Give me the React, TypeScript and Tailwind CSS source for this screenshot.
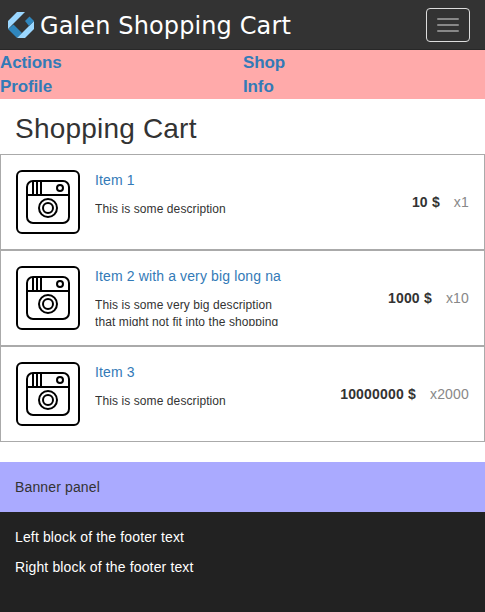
const helvetica = "font-['Liberation_Sans',sans-serif]";

interface Item {
  name: string;
  description: string;
  price: string;
  amount: string;
}

const items: Item[] = [
  { name: 'Item 1', description: 'This is some description', price: '10 $', amount: 'x1' },
  {
    name: 'Item 2 with a very big long na',
    description: 'This is some very big description that might not fit into the shopping',
    price: '1000 $',
    amount: 'x10',
  },
  { name: 'Item 3', description: 'This is some description', price: '10000000 $', amount: 'x2000' },
];

function Logo() {
  return (
    <svg width="26" height="26" viewBox="0 0 26 26" className="shrink-0">
      <path d="M0 17L5.5 12.5L14 21L9 26Z" fill="#2f86bd" />
      <path d="M0 9L9 0H17L0 17Z" fill="#9bd7ff" />
      <path d="M9 26L26 9V17L17 26Z" fill="#9bd7ff" />
      <path d="M17 9L21.5 4.5L26 9L21 14Z" fill="#2f86bd" />
    </svg>
  );
}

function CameraIcon() {
  return (
    <svg width="64" height="64" viewBox="0 0 64 64" fill="none" stroke="#000" strokeWidth="2" className="shrink-0">
      <rect x="1" y="1" width="62" height="62" rx="5" />
      <rect x="11" y="11" width="42" height="42" rx="6" />
      <path d="M11 25H53M17 11V25M21 11V25M25 11V25" />
      <circle cx="44" cy="18" r="3" />
      <circle cx="32" cy="38" r="9" />
      <circle cx="32" cy="38" r="5" />
    </svg>
  );
}

function CartItem({ name, description, price, amount }: Item) {
  return (
    <li className="flex h-24 border border-[#aaa] p-[15px]">
      <CameraIcon />
      <div className="ml-[15px] w-[190px] shrink-0">
        <a className="block h-5 whitespace-nowrap text-[14px] leading-5 tracking-[0.13px] text-[#337ab7]">{name}</a>
        <p className="mt-[11px] h-[29px] overflow-hidden text-[12px] leading-[17px] tracking-[0.09px] text-[#333]">
          {description}
        </p>
      </div>
      <div className="mt-[22px] -ml-10 flex grow justify-end gap-[14px] whitespace-nowrap text-[14px] leading-5 tracking-[0.18px]">
        <span className="font-bold text-[#333]">{price}</span>
        <span className="text-[#888]">{amount}</span>
      </div>
    </li>
  );
}

export default function App() {
  return (
    <div className={`flex min-h-[612px] flex-col bg-white text-[14px] leading-5 tracking-[0.14px] text-[#333] ${helvetica}`}>
      <header className="flex h-[50px] items-center justify-between border-b border-[#282828] bg-[#333] pl-2 pr-[15px]">
        <div className="flex items-center gap-[6px]">
          <Logo />
          <span className="pt-0.5 font-['DejaVu_Sans',sans-serif] text-[24px] leading-[48px] tracking-[0.12px] text-white">
            Galen Shopping Cart
          </span>
        </div>
        <button className="flex h-[34px] w-11 flex-col items-center justify-center gap-1 rounded border border-[#ddd]">
          <span className="h-0.5 w-[22px] rounded-[1px] bg-[#888]" />
          <span className="h-0.5 w-[22px] rounded-[1px] bg-[#888]" />
          <span className="h-0.5 w-[22px] rounded-[1px] bg-[#888]" />
        </button>
      </header>
      <nav className="grid h-[49px] grid-cols-[243px_1fr] content-start bg-[#faa] pt-px text-[17px] font-bold leading-6 tracking-[-0.12px] text-[#337ab7]">
        <a>Actions</a>
        <a>Shop</a>
        <a>Profile</a>
        <a>Info</a>
      </nav>
      <h1 className="mt-[13px] pl-[15px] text-[28px] leading-[33px] font-normal tracking-[0.2px]">Shopping Cart</h1>
      <ul className="mt-[9px]">
        {items.map((item) => (
          <CartItem key={item.name} {...item} />
        ))}
      </ul>
      <section className="mt-5 h-[50px] bg-[#aaf] p-[15px]">Banner panel</section>
      <footer className="flex grow flex-col gap-[10px] bg-[#222] p-[15px] text-white">
        <p>Left block of the footer text</p>
        <p>Right block of the footer text</p>
      </footer>
    </div>
  );
}
